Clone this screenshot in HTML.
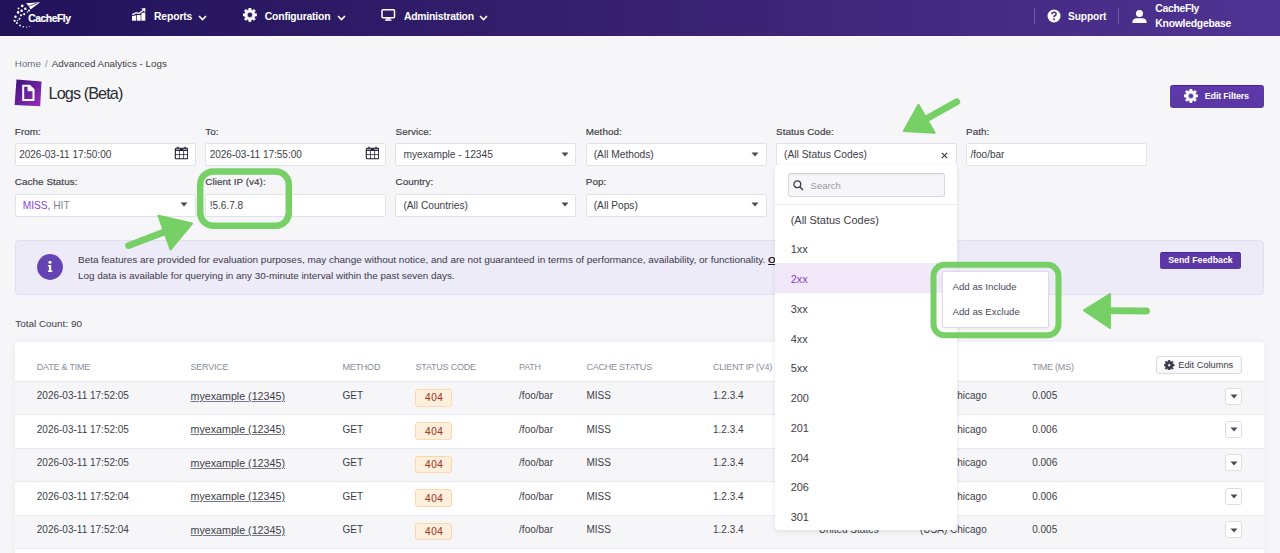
<!DOCTYPE html><html><head><meta charset="utf-8"><style>
*{margin:0;padding:0;box-sizing:border-box}
html,body{width:1280px;height:553px;overflow:hidden;background:#f6f6f9;font-family:"Liberation Sans", sans-serif;}
.t{position:absolute;white-space:nowrap}
.a{position:absolute}
</style></head><body>
<div class="a" style="left:0;top:0;width:1280px;height:36px;background:linear-gradient(90deg,#21125a 0%,#372170 50%,#4f3393 100%);"></div>
<div class="a" style="left:0;top:36px;width:1280px;height:1px;background:#fbfbfd;"></div>
<svg class="a" style="left:10px;top:0px" width="64" height="30" viewBox="10 0 64 30">
<path d="M26 3.3 L40.2 2.2 L30.5 9.6 L28.8 6.2 Z" fill="#fff"/>
<path d="M28.8 6.2 L37 3.2" stroke="#2a1562" stroke-width="0.7"/>
<g fill="#fff">
<circle cx="22.2" cy="5.9" r="1.35"/><circle cx="25.3" cy="8.7" r="1.25"/><circle cx="21.6" cy="10.7" r="1.3"/><circle cx="18.1" cy="12.4" r="1.3"/>
<circle cx="24.2" cy="14.2" r="1.1"/><circle cx="21" cy="15.3" r="1.1"/><circle cx="15.5" cy="16.8" r="1.2"/><circle cx="29" cy="10.4" r="1"/>
<circle cx="19.5" cy="18.8" r="1"/><circle cx="14.6" cy="20.8" r="1.1"/><circle cx="16.9" cy="23.1" r="1"/><circle cx="20.1" cy="25.4" r="0.9"/>
<circle cx="23.3" cy="26.8" r="0.8"/><circle cx="26.8" cy="27.1" r="0.6"/><circle cx="29.7" cy="26.6" r="0.5"/><circle cx="17.5" cy="20.5" r="0.7"/>
<circle cx="18.5" cy="8.5" r="0.9"/><circle cx="27.5" cy="12" r="0.8"/>
</g>
</svg>
<div class="t" style="left:28.3px;top:12.78px;font-size:10.3px;line-height:11.51px;color:#fff;font-weight:bold;letter-spacing:-0.45px;-webkit-text-stroke:0.2px #fff;">CacheFly</div>
<svg class="a" style="left:128px;top:4px" width="24" height="22" viewBox="0 0 24 22">
<rect x="4" y="11.4" width="4.1" height="5.3" fill="#fff"/><rect x="8.8" y="11" width="3.9" height="5.7" fill="#fff"/><rect x="13.3" y="8.6" width="4" height="8.1" fill="#fff"/>
<path d="M3.8 11.2 L8.4 9 L10.9 9.9 L15.6 6.3" stroke="#2a1862" stroke-width="2.6" fill="none"/>
<path d="M4.2 10.6 L8.4 8.6 L10.9 9.5 L15.3 6.2" stroke="#fff" stroke-width="1.3" fill="none"/>
<path d="M13.2 4.6 L17.4 4 L17.2 8.2 Z" fill="#fff"/>
</svg>
<div class="t" style="left:154px;top:11.39px;font-size:10.4px;line-height:11.62px;color:#fff;font-weight:bold;letter-spacing:-0.15px;">Reports</div>
<svg class="a" style="left:197.5px;top:14.5px" width="9" height="6" viewBox="0 0 9 6"><path d="M1 1 L4.5 4.5 L8 1" stroke="#fff" stroke-width="1.6" fill="none"/></svg>
<svg class="a" style="left:242.8px;top:8px" width="13.8" height="13.8" viewBox="-0.5 -0.5 1 1"><path d="M0.346 -0.144 L0.365 -0.085 L0.493 -0.082 L0.493 0.082 L0.365 0.085 L0.346 0.144 L0.318 0.198 L0.407 0.291 L0.291 0.407 L0.198 0.318 L0.144 0.346 L0.085 0.365 L0.082 0.493 L-0.082 0.493 L-0.085 0.365 L-0.144 0.346 L-0.198 0.318 L-0.291 0.407 L-0.407 0.291 L-0.318 0.198 L-0.346 0.144 L-0.365 0.085 L-0.493 0.082 L-0.493 -0.082 L-0.365 -0.085 L-0.346 -0.144 L-0.318 -0.198 L-0.407 -0.291 L-0.291 -0.407 L-0.198 -0.318 L-0.144 -0.346 L-0.085 -0.365 L-0.082 -0.493 L0.082 -0.493 L0.085 -0.365 L0.144 -0.346 L0.198 -0.318 L0.291 -0.407 L0.407 -0.291 L0.318 -0.198 Z M0.19 0 A0.19 0.19 0 1 0 -0.19 0 A0.19 0.19 0 1 0 0.19 0 Z" fill="#fff" fill-rule="evenodd" stroke="#fff" stroke-width="0.04" stroke-linejoin="round"/></svg>
<div class="t" style="left:264.8px;top:11.39px;font-size:10.4px;line-height:11.62px;color:#fff;font-weight:bold;letter-spacing:-0.2px;">Configuration</div>
<svg class="a" style="left:336.5px;top:14.5px" width="9" height="6" viewBox="0 0 9 6"><path d="M1 1 L4.5 4.5 L8 1" stroke="#fff" stroke-width="1.6" fill="none"/></svg>
<svg class="a" style="left:381px;top:9px" width="15" height="12" viewBox="0 0 15 12">
<rect x="1" y="0.8" width="12.5" height="8" rx="1" stroke="#fff" stroke-width="1.5" fill="none"/><rect x="5.5" y="9" width="3.5" height="1.5" fill="#fff"/><rect x="4" y="10.4" width="6.5" height="1.4" fill="#fff"/>
</svg>
<div class="t" style="left:404px;top:10.99px;font-size:10.4px;line-height:11.62px;color:#fff;font-weight:bold;letter-spacing:-0.25px;">Administration</div>
<svg class="a" style="left:479.2px;top:14.5px" width="9" height="6" viewBox="0 0 9 6"><path d="M1 1 L4.5 4.5 L8 1" stroke="#fff" stroke-width="1.6" fill="none"/></svg>
<div class="a" style="left:1034px;top:8px;width:1px;height:16px;background:rgba(255,255,255,0.22)"></div>
<div class="a" style="left:1118px;top:8px;width:1px;height:16px;background:rgba(255,255,255,0.22)"></div>
<svg class="a" style="left:1046.5px;top:8.8px" width="14" height="14" viewBox="0 0 14 14">
<circle cx="7" cy="7" r="6.5" fill="#fff"/>
<path d="M4.9 5.3 Q4.9 3.2 7 3.2 Q9.1 3.2 9.1 5 Q9.1 6.2 7.8 6.8 Q7 7.2 7 8.2" stroke="#4a2f8c" stroke-width="1.6" fill="none"/>
<circle cx="7" cy="10.3" r="0.95" fill="#4a2f8c"/>
</svg>
<div class="t" style="left:1068px;top:10.97px;font-size:10.2px;line-height:11.39px;color:#fff;font-weight:bold;letter-spacing:-0.1px;">Support</div>
<svg class="a" style="left:1132px;top:10px" width="15" height="13" viewBox="0 0 15 13">
<circle cx="7.5" cy="3.6" r="3.5" fill="#fff"/><path d="M0.3 13 Q0.3 8.2 4.8 8.2 L10.2 8.2 Q14.7 8.2 14.7 13 Z" fill="#fff"/>
</svg>
<div class="t" style="left:1155.3px;top:3.49px;font-size:10.4px;line-height:11.62px;color:#fff;font-weight:bold;letter-spacing:-0.3px;">CacheFly</div>
<div class="t" style="left:1155.3px;top:17.79px;font-size:10.4px;line-height:11.62px;color:#fff;font-weight:bold;letter-spacing:-0.25px;">Knowledgebase</div>
<div class="t" style="left:14.8px;top:59.41px;font-size:9.82px;line-height:10.97px;color:#3b3b45;font-weight:normal;"><span style="color:#6b6f7a">Home</span><span style="color:#8a8d96;margin:0 1.3px"> / </span>Advanced Analytics - Logs</div>
<svg class="a" style="left:13.5px;top:78.5px" width="29" height="29" viewBox="0 0 29 29">
<defs><linearGradient id="lg1" x1="0" y1="0" x2="1" y2="1"><stop offset="0" stop-color="#3a1478"/><stop offset="1" stop-color="#9a2cc0"/></linearGradient></defs>
<path d="M2.5 0.6 L27.5 2.5 L26.2 27.2 L0.6 25.9 Z" fill="url(#lg1)"/>
<path d="M9.2 6.7 L15.5 6.7 L19.5 10.7 L19.5 21.1 L9.2 21.1 Z" fill="none" stroke="#fff" stroke-width="2"/>
<path d="M14.3 6.7 L14.3 11.5 L19.5 11.5 Z" fill="#fff" stroke="#fff" stroke-width="1.5" stroke-linejoin="round"/>
</svg>
<div class="t" style="left:48.6px;top:83.94px;font-size:16.2px;line-height:18.10px;color:#2a2a33;font-weight:normal;letter-spacing:-0.9px;">Logs (Beta)</div>
<div class="a" style="left:1170px;top:85px;width:94px;height:23px;background:linear-gradient(#5f39ac,#5a37a3);border-top:1px solid #4a1fa0;border-radius:3px;"></div>
<svg class="a" style="left:1183.8px;top:89.3px" width="13.8" height="13.8" viewBox="-0.5 -0.5 1 1"><path d="M0.346 -0.144 L0.365 -0.085 L0.493 -0.082 L0.493 0.082 L0.365 0.085 L0.346 0.144 L0.318 0.198 L0.407 0.291 L0.291 0.407 L0.198 0.318 L0.144 0.346 L0.085 0.365 L0.082 0.493 L-0.082 0.493 L-0.085 0.365 L-0.144 0.346 L-0.198 0.318 L-0.291 0.407 L-0.407 0.291 L-0.318 0.198 L-0.346 0.144 L-0.365 0.085 L-0.493 0.082 L-0.493 -0.082 L-0.365 -0.085 L-0.346 -0.144 L-0.318 -0.198 L-0.407 -0.291 L-0.291 -0.407 L-0.198 -0.318 L-0.144 -0.346 L-0.085 -0.365 L-0.082 -0.493 L0.082 -0.493 L0.085 -0.365 L0.144 -0.346 L0.198 -0.318 L0.291 -0.407 L0.407 -0.291 L0.318 -0.198 Z M0.19 0 A0.19 0.19 0 1 0 -0.19 0 A0.19 0.19 0 1 0 0.19 0 Z" fill="#fff" fill-rule="evenodd" stroke="#fff" stroke-width="0.04" stroke-linejoin="round"/></svg>
<div class="t" style="left:1204.8px;top:91.36px;font-size:9.0px;line-height:10.05px;color:#fff;font-weight:bold;letter-spacing:-0.2px;">Edit Filters</div>
<div class="t" style="left:14.8px;top:126.24px;font-size:9.9px;line-height:11.06px;color:#3e3e48;font-weight:normal;-webkit-text-stroke:0.18px #3e3e48;letter-spacing:0.05px;">From:</div>
<div class="t" style="left:205.3px;top:126.24px;font-size:9.9px;line-height:11.06px;color:#3e3e48;font-weight:normal;-webkit-text-stroke:0.18px #3e3e48;letter-spacing:0.05px;">To:</div>
<div class="t" style="left:395.5px;top:126.24px;font-size:9.9px;line-height:11.06px;color:#3e3e48;font-weight:normal;-webkit-text-stroke:0.18px #3e3e48;letter-spacing:0.05px;">Service:</div>
<div class="t" style="left:585.8px;top:126.24px;font-size:9.9px;line-height:11.06px;color:#3e3e48;font-weight:normal;-webkit-text-stroke:0.18px #3e3e48;letter-spacing:0.05px;">Method:</div>
<div class="t" style="left:776.0999999999999px;top:126.24px;font-size:9.9px;line-height:11.06px;color:#3e3e48;font-weight:normal;-webkit-text-stroke:0.18px #3e3e48;letter-spacing:0.05px;">Status Code:</div>
<div class="t" style="left:966.0999999999999px;top:126.24px;font-size:9.9px;line-height:11.06px;color:#3e3e48;font-weight:normal;-webkit-text-stroke:0.18px #3e3e48;letter-spacing:0.05px;">Path:</div>
<div class="t" style="left:14.8px;top:176.34px;font-size:9.9px;line-height:11.06px;color:#3e3e48;font-weight:normal;-webkit-text-stroke:0.18px #3e3e48;letter-spacing:0.05px;">Cache Status:</div>
<div class="t" style="left:205.3px;top:176.34px;font-size:9.9px;line-height:11.06px;color:#3e3e48;font-weight:normal;-webkit-text-stroke:0.18px #3e3e48;letter-spacing:0.05px;">Client IP (v4):</div>
<div class="t" style="left:395.5px;top:176.34px;font-size:9.9px;line-height:11.06px;color:#3e3e48;font-weight:normal;-webkit-text-stroke:0.18px #3e3e48;letter-spacing:0.05px;">Country:</div>
<div class="t" style="left:585.8px;top:176.34px;font-size:9.9px;line-height:11.06px;color:#3e3e48;font-weight:normal;-webkit-text-stroke:0.18px #3e3e48;letter-spacing:0.05px;">Pop:</div>
<div class="a" style="left:14.5px;top:143px;width:181px;height:23px;background:#fff;border:1px solid #e2e3ea;border-radius:2px;"></div>
<div class="a" style="left:205px;top:143px;width:181px;height:23px;background:#fff;border:1px solid #e2e3ea;border-radius:2px;"></div>
<div class="a" style="left:395.2px;top:143px;width:181px;height:23px;background:#fff;border:1px solid #e2e3ea;border-radius:2px;"></div>
<div class="a" style="left:585.5px;top:143px;width:181px;height:23px;background:#fff;border:1px solid #e2e3ea;border-radius:2px;"></div>
<div class="a" style="left:775.8px;top:143px;width:181px;height:23px;background:#fff;border:1px solid #e2e3ea;border-radius:2px;"></div>
<div class="a" style="left:965.8px;top:143px;width:181px;height:23px;background:#fff;border:1px solid #e2e3ea;border-radius:2px;"></div>
<div class="a" style="left:14.5px;top:194px;width:181px;height:23px;background:#fff;border:1px solid #e2e3ea;border-radius:2px;"></div>
<div class="a" style="left:205px;top:194px;width:181px;height:23px;background:#fff;border:1px solid #e2e3ea;border-radius:2px;"></div>
<div class="a" style="left:395.2px;top:194px;width:181px;height:23px;background:#fff;border:1px solid #e2e3ea;border-radius:2px;"></div>
<div class="a" style="left:585.5px;top:194px;width:181px;height:23px;background:#fff;border:1px solid #e2e3ea;border-radius:2px;"></div>
<div class="t" style="left:19.2px;top:149.35px;font-size:10.0px;line-height:11.17px;color:#3d3d48;font-weight:normal;">2026-03-11 17:50:00</div>
<svg class="a" style="left:174.2px;top:146px" width="14" height="14" viewBox="0 0 14 14"><path d="M1.3 3.2 Q1.3 2.2 2.3 2.2 L12.7 2.2 Q13.7 2.2 13.7 3.2 L13.7 11.8 Q13.7 12.8 12.7 12.8 L2.3 12.8 Q1.3 12.8 1.3 11.8 Z" fill="none" stroke="#1c1a2e" stroke-width="1.1"/><rect x="1.3" y="3.6" width="12.4" height="1.3" fill="#1c1a2e"/><rect x="5.7" y="2.6" width="3.6" height="1.3" rx="0.6" fill="#1c1a2e"/><path d="M1.3 8.6 H13.7 M5.4 4.5 V12.8 M9.6 4.5 V12.8" stroke="#1c1a2e" stroke-width="0.75"/><circle cx="3.9" cy="1.6" r="0.75" fill="none" stroke="#1c1a2e" stroke-width="0.7"/><circle cx="11.1" cy="1.6" r="0.75" fill="none" stroke="#1c1a2e" stroke-width="0.7"/></svg>
<div class="t" style="left:209.7px;top:149.35px;font-size:10.0px;line-height:11.17px;color:#3d3d48;font-weight:normal;">2026-03-11 17:55:00</div>
<svg class="a" style="left:364.7px;top:146px" width="14" height="14" viewBox="0 0 14 14"><path d="M1.3 3.2 Q1.3 2.2 2.3 2.2 L12.7 2.2 Q13.7 2.2 13.7 3.2 L13.7 11.8 Q13.7 12.8 12.7 12.8 L2.3 12.8 Q1.3 12.8 1.3 11.8 Z" fill="none" stroke="#1c1a2e" stroke-width="1.1"/><rect x="1.3" y="3.6" width="12.4" height="1.3" fill="#1c1a2e"/><rect x="5.7" y="2.6" width="3.6" height="1.3" rx="0.6" fill="#1c1a2e"/><path d="M1.3 8.6 H13.7 M5.4 4.5 V12.8 M9.6 4.5 V12.8" stroke="#1c1a2e" stroke-width="0.75"/><circle cx="3.9" cy="1.6" r="0.75" fill="none" stroke="#1c1a2e" stroke-width="0.7"/><circle cx="11.1" cy="1.6" r="0.75" fill="none" stroke="#1c1a2e" stroke-width="0.7"/></svg>
<div class="t" style="left:403.4px;top:149.17px;font-size:10.2px;line-height:11.39px;color:#3d3d48;font-weight:normal;">myexample - 12345</div>
<svg class="a" style="left:560.7px;top:151.8px" width="8" height="5" viewBox="0 0 8 5"><path d="M0.5 0.5 L7.5 0.5 L4 4.5 Z" fill="#4a4a58"/></svg>
<div class="t" style="left:593.7px;top:149.17px;font-size:10.2px;line-height:11.39px;color:#3d3d48;font-weight:normal;">(All Methods)</div>
<svg class="a" style="left:751.0px;top:151.8px" width="8" height="5" viewBox="0 0 8 5"><path d="M0.5 0.5 L7.5 0.5 L4 4.5 Z" fill="#4a4a58"/></svg>
<div class="t" style="left:784.0px;top:149.08px;font-size:10.3px;line-height:11.51px;color:#3d3d48;font-weight:normal;">(All Status Codes)</div>
<svg class="a" style="left:941px;top:152px" width="7" height="7" viewBox="0 0 7 7"><path d="M0.8 0.8 L6.2 6.2 M6.2 0.8 L0.8 6.2" stroke="#3a3a46" stroke-width="1.15"/></svg>
<div class="t" style="left:970.5px;top:149.35px;font-size:10.0px;line-height:11.17px;color:#3d3d48;font-weight:normal;">/foo/bar</div>
<div class="t" style="left:22.7px;top:199.87px;font-size:10.2px;line-height:11.39px;color:#3d3d48;font-weight:normal;"><span style="color:#8a44d8">MISS, </span><span style="color:#858592">HIT</span></div>
<svg class="a" style="left:180.0px;top:202.3px" width="8" height="5" viewBox="0 0 8 5"><path d="M0.5 0.5 L7.5 0.5 L4 4.5 Z" fill="#4a4a58"/></svg>
<div class="t" style="left:209.7px;top:200.05px;font-size:10.0px;line-height:11.17px;color:#3d3d48;font-weight:normal;">!5.6.7.8</div>
<div class="t" style="left:403.4px;top:199.87px;font-size:10.2px;line-height:11.39px;color:#3d3d48;font-weight:normal;">(All Countries)</div>
<svg class="a" style="left:560.7px;top:202.3px" width="8" height="5" viewBox="0 0 8 5"><path d="M0.5 0.5 L7.5 0.5 L4 4.5 Z" fill="#4a4a58"/></svg>
<div class="t" style="left:593.7px;top:199.87px;font-size:10.2px;line-height:11.39px;color:#3d3d48;font-weight:normal;">(All Pops)</div>
<svg class="a" style="left:751.0px;top:202.3px" width="8" height="5" viewBox="0 0 8 5"><path d="M0.5 0.5 L7.5 0.5 L4 4.5 Z" fill="#4a4a58"/></svg>
<div class="a" style="left:14.5px;top:240px;width:1249.3px;height:55px;background:#eeebf8;border:1px solid #e2e0ed;border-radius:4px;"></div>
<svg class="a" style="left:37px;top:254px" width="26" height="26" viewBox="0 0 26 26"><circle cx="13" cy="13" r="12.9" fill="#6443b2"/>
<circle cx="13" cy="8.3" r="1.55" fill="#fff"/><path d="M10.9 11 H14.2 V16.6 H15.4 V18.1 H10.9 V16.6 H12 V12.4 H10.9 Z" fill="#fff"/></svg>
<div class="t" style="left:78px;top:254.08px;font-size:9.97px;line-height:11.14px;color:#3a3a48;font-weight:normal;">Beta features are provided for evaluation purposes, may change without notice, and are not guaranteed in terms of performance, availability, or functionality. <b style="text-decoration:underline;color:#1a1a22">Opt out</b></div>
<div class="t" style="left:78px;top:270.14px;font-size:9.9px;line-height:11.06px;color:#3a3a48;font-weight:normal;">Log data is available for querying in any 30-minute interval within the past seven days.</div>
<div class="a" style="left:1160px;top:252px;width:81px;height:17px;background:#5c37a6;border-top:1px solid #4a1fa0;border-radius:2.5px;"></div>
<div class="t" style="left:1168.2px;top:255.54px;font-size:8.8px;line-height:9.83px;color:#fff;font-weight:bold;">Send Feedback</div>
<div class="t" style="left:15.2px;top:318.01px;font-size:9.93px;line-height:11.09px;color:#3d3d48;font-weight:normal;">Total Count: 90</div>
<div class="a" style="left:14.5px;top:341.7px;width:1249.5px;height:220px;background:#fff;border-radius:4px;box-shadow:0 0 8px rgba(30,30,60,0.05);"></div>
<div class="t" style="left:36.8px;top:362.46px;font-size:9.0px;line-height:10.05px;color:#8b8d9a;font-weight:normal;letter-spacing:-0.22px;">DATE &amp; TIME</div>
<div class="t" style="left:190.5px;top:362.46px;font-size:9.0px;line-height:10.05px;color:#8b8d9a;font-weight:normal;letter-spacing:-0.22px;">SERVICE</div>
<div class="t" style="left:342.5px;top:362.46px;font-size:9.0px;line-height:10.05px;color:#8b8d9a;font-weight:normal;letter-spacing:-0.22px;">METHOD</div>
<div class="t" style="left:415.5px;top:362.46px;font-size:9.0px;line-height:10.05px;color:#8b8d9a;font-weight:normal;letter-spacing:-0.22px;">STATUS CODE</div>
<div class="t" style="left:519.1px;top:362.46px;font-size:9.0px;line-height:10.05px;color:#8b8d9a;font-weight:normal;letter-spacing:-0.22px;">PATH</div>
<div class="t" style="left:586.4px;top:362.46px;font-size:9.0px;line-height:10.05px;color:#8b8d9a;font-weight:normal;letter-spacing:-0.22px;">CACHE STATUS</div>
<div class="t" style="left:713px;top:362.46px;font-size:9.0px;line-height:10.05px;color:#8b8d9a;font-weight:normal;letter-spacing:-0.22px;">CLIENT IP (V4)</div>
<div class="t" style="left:818.7px;top:362.46px;font-size:9.0px;line-height:10.05px;color:#8b8d9a;font-weight:normal;letter-spacing:-0.22px;">COUNTRY</div>
<div class="t" style="left:920px;top:362.46px;font-size:9.0px;line-height:10.05px;color:#8b8d9a;font-weight:normal;letter-spacing:-0.22px;">POP</div>
<div class="t" style="left:1032.2px;top:362.46px;font-size:9.0px;line-height:10.05px;color:#8b8d9a;font-weight:normal;letter-spacing:-0.22px;">TIME (MS)</div>
<div class="a" style="left:1156px;top:356.4px;width:86px;height:17.3px;background:linear-gradient(#fff,#f7f7fa);border:1px solid #d9dae2;border-radius:3px;"></div>
<svg class="a" style="left:1164.4px;top:359.9px" width="10.4" height="10.4" viewBox="-0.5 -0.5 1 1"><path d="M0.346 -0.144 L0.365 -0.085 L0.493 -0.082 L0.493 0.082 L0.365 0.085 L0.346 0.144 L0.318 0.198 L0.407 0.291 L0.291 0.407 L0.198 0.318 L0.144 0.346 L0.085 0.365 L0.082 0.493 L-0.082 0.493 L-0.085 0.365 L-0.144 0.346 L-0.198 0.318 L-0.291 0.407 L-0.407 0.291 L-0.318 0.198 L-0.346 0.144 L-0.365 0.085 L-0.493 0.082 L-0.493 -0.082 L-0.365 -0.085 L-0.346 -0.144 L-0.318 -0.198 L-0.407 -0.291 L-0.291 -0.407 L-0.198 -0.318 L-0.144 -0.346 L-0.085 -0.365 L-0.082 -0.493 L0.082 -0.493 L0.085 -0.365 L0.144 -0.346 L0.198 -0.318 L0.291 -0.407 L0.407 -0.291 L0.318 -0.198 Z M0.13 0 A0.13 0.13 0 1 0 -0.13 0 A0.13 0.13 0 1 0 0.13 0 Z" fill="#3a3a48" fill-rule="evenodd" stroke="#3a3a48" stroke-width="0.04" stroke-linejoin="round"/></svg>
<div class="t" style="left:1178.3px;top:360.15px;font-size:9.23px;line-height:10.31px;color:#3a3a48;font-weight:normal;">Edit Columns</div>
<div class="a" style="left:14.5px;top:381.1px;width:1249.5px;height:1px;background:#e8e8ee"></div>
<div class="a" style="left:14.5px;top:382.1px;width:1249.5px;height:33.299999999999955px;background:#f6f6f9;border-bottom:1px solid #e8e8ee"></div>
<div class="t" style="left:36.8px;top:390.35px;font-size:10.0px;line-height:11.17px;color:#3d3d48;font-weight:normal;">2026-03-11 17:52:05</div>
<div class="t" style="left:190.5px;top:391.12px;font-size:10.7px;line-height:11.95px;color:#3d3d48;font-weight:normal;text-decoration:underline;text-decoration-color:#77778a;">myexample (12345)</div>
<div class="t" style="left:342.5px;top:390.35px;font-size:10.0px;line-height:11.17px;color:#3d3d48;font-weight:normal;">GET</div>
<div class="a" style="left:415.0px;top:389.1px;width:37.2px;height:17.6px;background:#fff0dd;border:1px solid #fbd7ab;border-radius:3px;"></div>
<div class="t" style="left:425.0px;top:392.35px;font-size:10.0px;line-height:11.17px;color:#a03a22;font-weight:normal;letter-spacing:0.6px;-webkit-text-stroke:0.1px #a03a22;">404</div>
<div class="t" style="left:519.1px;top:390.35px;font-size:10.0px;line-height:11.17px;color:#3d3d48;font-weight:normal;">/foo/bar</div>
<div class="t" style="left:586.4px;top:390.35px;font-size:10.0px;line-height:11.17px;color:#3d3d48;font-weight:normal;">MISS</div>
<div class="t" style="left:713px;top:390.35px;font-size:10.0px;line-height:11.17px;color:#3d3d48;font-weight:normal;">1.2.3.4</div>
<div class="t" style="left:818.7px;top:390.35px;font-size:10.0px;line-height:11.17px;color:#3d3d48;font-weight:normal;">United States</div>
<div class="t" style="left:920px;top:390.35px;font-size:10.0px;line-height:11.17px;color:#3d3d48;font-weight:normal;">(USA) Chicago</div>
<div class="t" style="left:1032.2px;top:390.35px;font-size:10.0px;line-height:11.17px;color:#3d3d48;font-weight:normal;">0.005</div>
<div class="a" style="left:1225.3px;top:387.70000000000005px;width:17px;height:17px;background:#fff;border:1px solid #dcdde4;border-radius:2.5px;"></div>
<svg class="a" style="left:1229.8px;top:394.0px" width="8" height="5" viewBox="0 0 8 5"><path d="M0.5 0.5 L7.5 0.5 L4 4.5 Z" fill="#4a4a58"/></svg>
<div class="a" style="left:14.5px;top:415.4px;width:1249.5px;height:33.400000000000034px;background:#fff;border-bottom:1px solid #e8e8ee"></div>
<div class="t" style="left:36.8px;top:423.65px;font-size:10.0px;line-height:11.17px;color:#3d3d48;font-weight:normal;">2026-03-11 17:52:05</div>
<div class="t" style="left:190.5px;top:424.42px;font-size:10.7px;line-height:11.95px;color:#3d3d48;font-weight:normal;text-decoration:underline;text-decoration-color:#77778a;">myexample (12345)</div>
<div class="t" style="left:342.5px;top:423.65px;font-size:10.0px;line-height:11.17px;color:#3d3d48;font-weight:normal;">GET</div>
<div class="a" style="left:415.0px;top:422.4px;width:37.2px;height:17.6px;background:#fff0dd;border:1px solid #fbd7ab;border-radius:3px;"></div>
<div class="t" style="left:425.0px;top:425.65px;font-size:10.0px;line-height:11.17px;color:#a03a22;font-weight:normal;letter-spacing:0.6px;-webkit-text-stroke:0.1px #a03a22;">404</div>
<div class="t" style="left:519.1px;top:423.65px;font-size:10.0px;line-height:11.17px;color:#3d3d48;font-weight:normal;">/foo/bar</div>
<div class="t" style="left:586.4px;top:423.65px;font-size:10.0px;line-height:11.17px;color:#3d3d48;font-weight:normal;">MISS</div>
<div class="t" style="left:713px;top:423.65px;font-size:10.0px;line-height:11.17px;color:#3d3d48;font-weight:normal;">1.2.3.4</div>
<div class="t" style="left:818.7px;top:423.65px;font-size:10.0px;line-height:11.17px;color:#3d3d48;font-weight:normal;">United States</div>
<div class="t" style="left:920px;top:423.65px;font-size:10.0px;line-height:11.17px;color:#3d3d48;font-weight:normal;">(USA) Chicago</div>
<div class="t" style="left:1032.2px;top:423.65px;font-size:10.0px;line-height:11.17px;color:#3d3d48;font-weight:normal;">0.006</div>
<div class="a" style="left:1225.3px;top:421.0px;width:17px;height:17px;background:#fff;border:1px solid #dcdde4;border-radius:2.5px;"></div>
<svg class="a" style="left:1229.8px;top:427.29999999999995px" width="8" height="5" viewBox="0 0 8 5"><path d="M0.5 0.5 L7.5 0.5 L4 4.5 Z" fill="#4a4a58"/></svg>
<div class="a" style="left:14.5px;top:448.8px;width:1249.5px;height:33.5px;background:#f6f6f9;border-bottom:1px solid #e8e8ee"></div>
<div class="t" style="left:36.8px;top:457.05px;font-size:10.0px;line-height:11.17px;color:#3d3d48;font-weight:normal;">2026-03-11 17:52:05</div>
<div class="t" style="left:190.5px;top:457.82px;font-size:10.7px;line-height:11.95px;color:#3d3d48;font-weight:normal;text-decoration:underline;text-decoration-color:#77778a;">myexample (12345)</div>
<div class="t" style="left:342.5px;top:457.05px;font-size:10.0px;line-height:11.17px;color:#3d3d48;font-weight:normal;">GET</div>
<div class="a" style="left:415.0px;top:455.8px;width:37.2px;height:17.6px;background:#fff0dd;border:1px solid #fbd7ab;border-radius:3px;"></div>
<div class="t" style="left:425.0px;top:459.05px;font-size:10.0px;line-height:11.17px;color:#a03a22;font-weight:normal;letter-spacing:0.6px;-webkit-text-stroke:0.1px #a03a22;">404</div>
<div class="t" style="left:519.1px;top:457.05px;font-size:10.0px;line-height:11.17px;color:#3d3d48;font-weight:normal;">/foo/bar</div>
<div class="t" style="left:586.4px;top:457.05px;font-size:10.0px;line-height:11.17px;color:#3d3d48;font-weight:normal;">MISS</div>
<div class="t" style="left:713px;top:457.05px;font-size:10.0px;line-height:11.17px;color:#3d3d48;font-weight:normal;">1.2.3.4</div>
<div class="t" style="left:818.7px;top:457.05px;font-size:10.0px;line-height:11.17px;color:#3d3d48;font-weight:normal;">United States</div>
<div class="t" style="left:920px;top:457.05px;font-size:10.0px;line-height:11.17px;color:#3d3d48;font-weight:normal;">(USA) Chicago</div>
<div class="t" style="left:1032.2px;top:457.05px;font-size:10.0px;line-height:11.17px;color:#3d3d48;font-weight:normal;">0.006</div>
<div class="a" style="left:1225.3px;top:454.40000000000003px;width:17px;height:17px;background:#fff;border:1px solid #dcdde4;border-radius:2.5px;"></div>
<svg class="a" style="left:1229.8px;top:460.7px" width="8" height="5" viewBox="0 0 8 5"><path d="M0.5 0.5 L7.5 0.5 L4 4.5 Z" fill="#4a4a58"/></svg>
<div class="a" style="left:14.5px;top:482.3px;width:1249.5px;height:33.30000000000001px;background:#fff;border-bottom:1px solid #e8e8ee"></div>
<div class="t" style="left:36.8px;top:490.55px;font-size:10.0px;line-height:11.17px;color:#3d3d48;font-weight:normal;">2026-03-11 17:52:04</div>
<div class="t" style="left:190.5px;top:491.32px;font-size:10.7px;line-height:11.95px;color:#3d3d48;font-weight:normal;text-decoration:underline;text-decoration-color:#77778a;">myexample (12345)</div>
<div class="t" style="left:342.5px;top:490.55px;font-size:10.0px;line-height:11.17px;color:#3d3d48;font-weight:normal;">GET</div>
<div class="a" style="left:415.0px;top:489.3px;width:37.2px;height:17.6px;background:#fff0dd;border:1px solid #fbd7ab;border-radius:3px;"></div>
<div class="t" style="left:425.0px;top:492.55px;font-size:10.0px;line-height:11.17px;color:#a03a22;font-weight:normal;letter-spacing:0.6px;-webkit-text-stroke:0.1px #a03a22;">404</div>
<div class="t" style="left:519.1px;top:490.55px;font-size:10.0px;line-height:11.17px;color:#3d3d48;font-weight:normal;">/foo/bar</div>
<div class="t" style="left:586.4px;top:490.55px;font-size:10.0px;line-height:11.17px;color:#3d3d48;font-weight:normal;">MISS</div>
<div class="t" style="left:713px;top:490.55px;font-size:10.0px;line-height:11.17px;color:#3d3d48;font-weight:normal;">1.2.3.4</div>
<div class="t" style="left:818.7px;top:490.55px;font-size:10.0px;line-height:11.17px;color:#3d3d48;font-weight:normal;">United States</div>
<div class="t" style="left:920px;top:490.55px;font-size:10.0px;line-height:11.17px;color:#3d3d48;font-weight:normal;">(USA) Chicago</div>
<div class="t" style="left:1032.2px;top:490.55px;font-size:10.0px;line-height:11.17px;color:#3d3d48;font-weight:normal;">0.006</div>
<div class="a" style="left:1225.3px;top:487.90000000000003px;width:17px;height:17px;background:#fff;border:1px solid #dcdde4;border-radius:2.5px;"></div>
<svg class="a" style="left:1229.8px;top:494.2px" width="8" height="5" viewBox="0 0 8 5"><path d="M0.5 0.5 L7.5 0.5 L4 4.5 Z" fill="#4a4a58"/></svg>
<div class="a" style="left:14.5px;top:515.6px;width:1249.5px;height:33.39999999999998px;background:#f6f6f9;border-bottom:1px solid #e8e8ee"></div>
<div class="t" style="left:36.8px;top:523.85px;font-size:10.0px;line-height:11.17px;color:#3d3d48;font-weight:normal;">2026-03-11 17:52:04</div>
<div class="t" style="left:190.5px;top:524.62px;font-size:10.7px;line-height:11.95px;color:#3d3d48;font-weight:normal;text-decoration:underline;text-decoration-color:#77778a;">myexample (12345)</div>
<div class="t" style="left:342.5px;top:523.85px;font-size:10.0px;line-height:11.17px;color:#3d3d48;font-weight:normal;">GET</div>
<div class="a" style="left:415.0px;top:522.6px;width:37.2px;height:17.6px;background:#fff0dd;border:1px solid #fbd7ab;border-radius:3px;"></div>
<div class="t" style="left:425.0px;top:525.85px;font-size:10.0px;line-height:11.17px;color:#a03a22;font-weight:normal;letter-spacing:0.6px;-webkit-text-stroke:0.1px #a03a22;">404</div>
<div class="t" style="left:519.1px;top:523.85px;font-size:10.0px;line-height:11.17px;color:#3d3d48;font-weight:normal;">/foo/bar</div>
<div class="t" style="left:586.4px;top:523.85px;font-size:10.0px;line-height:11.17px;color:#3d3d48;font-weight:normal;">MISS</div>
<div class="t" style="left:713px;top:523.85px;font-size:10.0px;line-height:11.17px;color:#3d3d48;font-weight:normal;">1.2.3.4</div>
<div class="t" style="left:818.7px;top:523.85px;font-size:10.0px;line-height:11.17px;color:#3d3d48;font-weight:normal;">United States</div>
<div class="t" style="left:920px;top:523.85px;font-size:10.0px;line-height:11.17px;color:#3d3d48;font-weight:normal;">(USA) Chicago</div>
<div class="t" style="left:1032.2px;top:523.85px;font-size:10.0px;line-height:11.17px;color:#3d3d48;font-weight:normal;">0.005</div>
<div class="a" style="left:1225.3px;top:521.2px;width:17px;height:17px;background:#fff;border:1px solid #dcdde4;border-radius:2.5px;"></div>
<svg class="a" style="left:1229.8px;top:527.5px" width="8" height="5" viewBox="0 0 8 5"><path d="M0.5 0.5 L7.5 0.5 L4 4.5 Z" fill="#4a4a58"/></svg>
<div class="a" style="left:775px;top:165.4px;width:182px;height:365.1px;background:#fff;border-radius:0 0 4px 4px;box-shadow:0 2px 5px rgba(40,40,80,0.10);"></div>
<div class="a" style="left:788px;top:173px;width:156.6px;height:24px;background:#f6f6f9;border:1px solid #d6d7de;border-top-color:#cfd0d8;border-radius:3px;box-shadow:inset 0 1px 1px rgba(0,0,0,0.04)"></div>
<svg class="a" style="left:793px;top:180px" width="11" height="11" viewBox="0 0 11 11"><circle cx="4.3" cy="4.3" r="3.4" fill="none" stroke="#3a3a48" stroke-width="1.3"/><path d="M6.8 6.8 L10 10" stroke="#3a3a48" stroke-width="1.5"/></svg>
<div class="t" style="left:810.6px;top:180.60px;font-size:9.5px;line-height:10.61px;color:#9a9aa6;font-weight:normal;">Search</div>
<div class="a" style="left:775px;top:204px;width:182px;height:1px;background:#ececf1"></div>
<div class="t" style="left:790.7px;top:213.69px;font-size:10.95px;line-height:12.23px;color:#3d3d48;font-weight:normal;">(All Status Codes)</div>
<div class="t" style="left:790.7px;top:243.44px;font-size:10.95px;line-height:12.23px;color:#3d3d48;font-weight:normal;">1xx</div>
<div class="a" style="left:775px;top:263.30px;width:182px;height:29.75px;background:#f1e9f9"></div>
<div class="t" style="left:790.7px;top:273.19px;font-size:10.95px;line-height:12.23px;color:#8a3fd6;font-weight:normal;">2xx</div>
<div class="t" style="left:790.7px;top:302.94px;font-size:10.95px;line-height:12.23px;color:#3d3d48;font-weight:normal;">3xx</div>
<div class="t" style="left:790.7px;top:332.69px;font-size:10.95px;line-height:12.23px;color:#3d3d48;font-weight:normal;">4xx</div>
<div class="t" style="left:790.7px;top:362.44px;font-size:10.95px;line-height:12.23px;color:#3d3d48;font-weight:normal;">5xx</div>
<div class="t" style="left:790.7px;top:392.19px;font-size:10.95px;line-height:12.23px;color:#3d3d48;font-weight:normal;">200</div>
<div class="t" style="left:790.7px;top:421.94px;font-size:10.95px;line-height:12.23px;color:#3d3d48;font-weight:normal;">201</div>
<div class="t" style="left:790.7px;top:451.69px;font-size:10.95px;line-height:12.23px;color:#3d3d48;font-weight:normal;">204</div>
<div class="t" style="left:790.7px;top:481.44px;font-size:10.95px;line-height:12.23px;color:#3d3d48;font-weight:normal;">206</div>
<div class="t" style="left:790.7px;top:511.19px;font-size:10.95px;line-height:12.23px;color:#3d3d48;font-weight:normal;">301</div>
<div class="a" style="left:942.4px;top:271.3px;width:106.4px;height:57px;background:#fff;border:1px solid #dadbe3;border-radius:2px;box-shadow:0 1px 3px rgba(0,0,0,0.06)"></div>
<div class="t" style="left:952.5px;top:282.12px;font-size:9.7px;line-height:10.83px;color:#4a4a5a;font-weight:normal;">Add as Include</div>
<div class="t" style="left:952.5px;top:307.42px;font-size:9.7px;line-height:10.83px;color:#4a4a5a;font-weight:normal;">Add as Exclude</div>
<svg class="a" style="left:0;top:0" width="1280" height="553" viewBox="0 0 1280 553">
<rect x="200.2" y="171.4" width="88.6" height="54.4" rx="13" fill="none" stroke="#76d065" stroke-width="6.5"/>
<rect x="933.5" y="264.8" width="125" height="70.5" rx="11" fill="none" stroke="#76d065" stroke-width="6"/>
<g stroke="#76d065" stroke-width="6.8" stroke-linecap="round" fill="none">
<path d="M128.5 245.6 L172 229"/>
<path d="M956.8 101.8 L926 119"/>
<path d="M1146.5 311 L1105 310.6"/>
</g>
<g fill="#76d065" stroke="#76d065" stroke-width="2" stroke-linejoin="round">
<path d="M192 223.5 L158.5 215.8 L170.5 249.5 Z"/>
<path d="M903.8 131 L918.5 104.7 L934.6 132.8 Z"/>
<path d="M1084 310.4 L1110 294 L1110 328 Z"/>
</g>
</svg>
</body></html>
